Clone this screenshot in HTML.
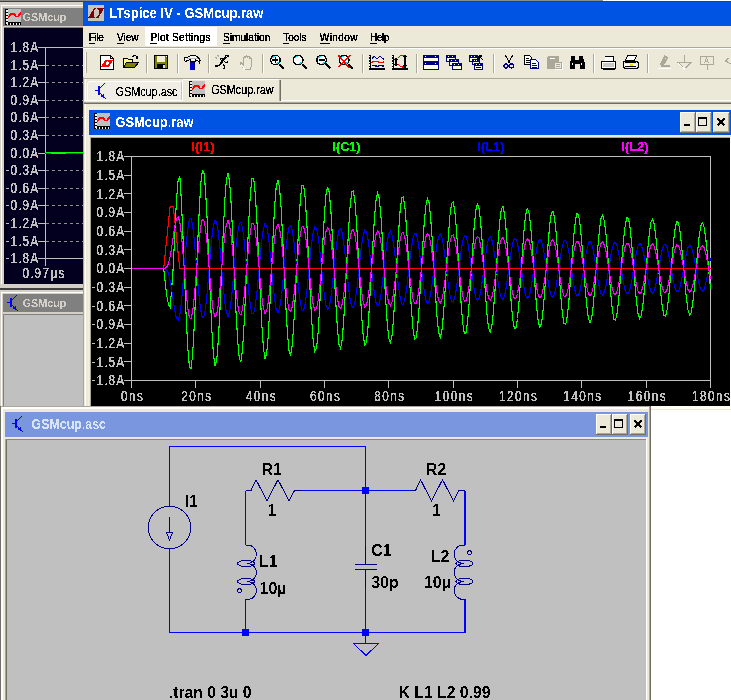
<!DOCTYPE html>
<html><head><meta charset="utf-8"><style>
html,body{margin:0;padding:0;background:#fff;width:731px;height:700px;overflow:hidden}
svg{display:block;font-family:"Liberation Sans",sans-serif}
</style></head><body>
<svg width="731" height="700" viewBox="0 0 731 700">
<defs><filter id="crispL" filterUnits="userSpaceOnUse" x="0" y="0" width="731" height="700"><feComponentTransfer><feFuncA type="discrete" tableValues="0 1 1 1"/></feComponentTransfer></filter>
<filter id="crispM" filterUnits="userSpaceOnUse" x="0" y="0" width="731" height="700"><feComponentTransfer><feFuncA type="discrete" tableValues="0 1 1"/></feComponentTransfer></filter>
<filter id="crispH" filterUnits="userSpaceOnUse" x="0" y="0" width="731" height="700"><feComponentTransfer><feFuncA type="discrete" tableValues="0 1"/></feComponentTransfer></filter><clipPath id="pc"><rect x="91" y="138" width="639" height="268"/></clipPath></defs>
<g shape-rendering="crispEdges">
<rect x="0" y="0" width="731" height="700" fill="#FFFFFF" />
<rect x="0" y="0" width="603" height="1" fill="#8C8C88" />
<rect x="0" y="1" width="83" height="1" fill="#404040" />
<rect x="0" y="2" width="83" height="287" fill="#D4D0C8" />
<rect x="1" y="5" width="82" height="1" fill="#FFFFFF" />
<rect x="1" y="5" width="1" height="283" fill="#FFFFFF" />
<rect x="3" y="8" width="80" height="18" fill="#808080" />
<rect x="8" y="9" width="13" height="13" fill="#C0C0C0" />
<rect x="5" y="9" width="3" height="16" fill="#000" />
<rect x="5" y="22" width="16" height="3" fill="#000" />
<rect x="6" y="10" width="1.5" height="1.5" fill="#F0F0F0" />
<rect x="6" y="13" width="1.5" height="1.5" fill="#F0F0F0" />
<rect x="6" y="16" width="1.5" height="1.5" fill="#F0F0F0" />
<rect x="6" y="19" width="1.5" height="1.5" fill="#F0F0F0" />
<rect x="6" y="22" width="1.5" height="1.5" fill="#F0F0F0" />
<rect x="6.5" y="23" width="1.5" height="1.5" fill="#F0F0F0" />
<rect x="9.5" y="23" width="1.5" height="1.5" fill="#F0F0F0" />
<rect x="12.5" y="23" width="1.5" height="1.5" fill="#F0F0F0" />
<rect x="15.5" y="23" width="1.5" height="1.5" fill="#F0F0F0" />
<rect x="18.5" y="23" width="1.5" height="1.5" fill="#F0F0F0" />
<path d="M8,17.5 L11,14 L14,14 L16,16.5 L18,16.5 L21,12.5" stroke="#FF0000" fill="none" stroke-width="1.8" />
<g filter="url(#crispH)"><text x="22.5" y="21.3" font-size="11.5" fill="#D4D0C8" font-weight="bold" text-anchor="start" textLength="44" lengthAdjust="spacingAndGlyphs">GSMcup</text></g>
<rect x="3" y="26" width="80" height="1" fill="#D4D0C8" />
<rect x="4" y="27" width="79" height="1" fill="#808080" />
<rect x="4" y="28" width="79" height="256" fill="#00001C" />
<rect x="5" y="28" width="78" height="255" fill="#02001E" />
<g filter="url(#crispL)"><text transform="translate(10.50,52.1) scale(0.84,1)" x="0.0 9.52 14.29 23.81" y="0" font-size="14" fill="#C0C0C0">1.8A</text></g>
<rect x="38" y="47" width="8" height="1" fill="#C0C0C0" />
<rect x="45" y="47" width="38" height="1" fill="#C0C0C0" />
<g filter="url(#crispL)"><text transform="translate(10.50,70.1) scale(0.84,1)" x="0.0 9.52 14.29 23.81" y="0" font-size="14" fill="#C0C0C0">1.5A</text></g>
<rect x="38" y="65" width="8" height="1" fill="#C0C0C0" />
<rect x="46" y="65" width="3" height="1" fill="#909090" />
<rect x="52" y="65" width="3" height="1" fill="#909090" />
<rect x="58" y="65" width="3" height="1" fill="#909090" />
<rect x="64" y="65" width="3" height="1" fill="#909090" />
<rect x="70" y="65" width="3" height="1" fill="#909090" />
<rect x="76" y="65" width="3" height="1" fill="#909090" />
<rect x="82" y="65" width="3" height="1" fill="#909090" />
<g filter="url(#crispL)"><text transform="translate(10.50,87.1) scale(0.84,1)" x="0.0 9.52 14.29 23.81" y="0" font-size="14" fill="#C0C0C0">1.2A</text></g>
<rect x="38" y="82" width="8" height="1" fill="#C0C0C0" />
<rect x="46" y="82" width="3" height="1" fill="#909090" />
<rect x="52" y="82" width="3" height="1" fill="#909090" />
<rect x="58" y="82" width="3" height="1" fill="#909090" />
<rect x="64" y="82" width="3" height="1" fill="#909090" />
<rect x="70" y="82" width="3" height="1" fill="#909090" />
<rect x="76" y="82" width="3" height="1" fill="#909090" />
<rect x="82" y="82" width="3" height="1" fill="#909090" />
<g filter="url(#crispL)"><text transform="translate(10.50,105.1) scale(0.84,1)" x="0.0 9.52 14.29 23.81" y="0" font-size="14" fill="#C0C0C0">0.9A</text></g>
<rect x="38" y="100" width="8" height="1" fill="#C0C0C0" />
<rect x="46" y="100" width="3" height="1" fill="#909090" />
<rect x="52" y="100" width="3" height="1" fill="#909090" />
<rect x="58" y="100" width="3" height="1" fill="#909090" />
<rect x="64" y="100" width="3" height="1" fill="#909090" />
<rect x="70" y="100" width="3" height="1" fill="#909090" />
<rect x="76" y="100" width="3" height="1" fill="#909090" />
<rect x="82" y="100" width="3" height="1" fill="#909090" />
<g filter="url(#crispL)"><text transform="translate(10.50,122.1) scale(0.84,1)" x="0.0 9.52 14.29 23.81" y="0" font-size="14" fill="#C0C0C0">0.6A</text></g>
<rect x="38" y="117" width="8" height="1" fill="#C0C0C0" />
<rect x="46" y="117" width="3" height="1" fill="#909090" />
<rect x="52" y="117" width="3" height="1" fill="#909090" />
<rect x="58" y="117" width="3" height="1" fill="#909090" />
<rect x="64" y="117" width="3" height="1" fill="#909090" />
<rect x="70" y="117" width="3" height="1" fill="#909090" />
<rect x="76" y="117" width="3" height="1" fill="#909090" />
<rect x="82" y="117" width="3" height="1" fill="#909090" />
<g filter="url(#crispL)"><text transform="translate(10.50,140.1) scale(0.84,1)" x="0.0 9.52 14.29 23.81" y="0" font-size="14" fill="#C0C0C0">0.3A</text></g>
<rect x="38" y="135" width="8" height="1" fill="#C0C0C0" />
<rect x="46" y="135" width="3" height="1" fill="#909090" />
<rect x="52" y="135" width="3" height="1" fill="#909090" />
<rect x="58" y="135" width="3" height="1" fill="#909090" />
<rect x="64" y="135" width="3" height="1" fill="#909090" />
<rect x="70" y="135" width="3" height="1" fill="#909090" />
<rect x="76" y="135" width="3" height="1" fill="#909090" />
<rect x="82" y="135" width="3" height="1" fill="#909090" />
<g filter="url(#crispL)"><text transform="translate(10.50,158.1) scale(0.84,1)" x="0.0 9.52 14.29 23.81" y="0" font-size="14" fill="#C0C0C0">0.0A</text></g>
<rect x="38" y="153" width="8" height="1" fill="#C0C0C0" />
<rect x="46" y="153" width="3" height="1" fill="#909090" />
<rect x="52" y="153" width="3" height="1" fill="#909090" />
<rect x="58" y="153" width="3" height="1" fill="#909090" />
<rect x="64" y="153" width="3" height="1" fill="#909090" />
<rect x="70" y="153" width="3" height="1" fill="#909090" />
<rect x="76" y="153" width="3" height="1" fill="#909090" />
<rect x="82" y="153" width="3" height="1" fill="#909090" />
<g filter="url(#crispL)"><text transform="translate(5.50,175.1) scale(0.84,1)" x="0.0 5.95 15.48 20.24 29.76" y="0" font-size="14" fill="#C0C0C0">-0.3A</text></g>
<rect x="38" y="170" width="8" height="1" fill="#C0C0C0" />
<rect x="46" y="170" width="3" height="1" fill="#909090" />
<rect x="52" y="170" width="3" height="1" fill="#909090" />
<rect x="58" y="170" width="3" height="1" fill="#909090" />
<rect x="64" y="170" width="3" height="1" fill="#909090" />
<rect x="70" y="170" width="3" height="1" fill="#909090" />
<rect x="76" y="170" width="3" height="1" fill="#909090" />
<rect x="82" y="170" width="3" height="1" fill="#909090" />
<g filter="url(#crispL)"><text transform="translate(5.50,193.1) scale(0.84,1)" x="0.0 5.95 15.48 20.24 29.76" y="0" font-size="14" fill="#C0C0C0">-0.6A</text></g>
<rect x="38" y="188" width="8" height="1" fill="#C0C0C0" />
<rect x="46" y="188" width="3" height="1" fill="#909090" />
<rect x="52" y="188" width="3" height="1" fill="#909090" />
<rect x="58" y="188" width="3" height="1" fill="#909090" />
<rect x="64" y="188" width="3" height="1" fill="#909090" />
<rect x="70" y="188" width="3" height="1" fill="#909090" />
<rect x="76" y="188" width="3" height="1" fill="#909090" />
<rect x="82" y="188" width="3" height="1" fill="#909090" />
<g filter="url(#crispL)"><text transform="translate(5.50,210.1) scale(0.84,1)" x="0.0 5.95 15.48 20.24 29.76" y="0" font-size="14" fill="#C0C0C0">-0.9A</text></g>
<rect x="38" y="205" width="8" height="1" fill="#C0C0C0" />
<rect x="46" y="205" width="3" height="1" fill="#909090" />
<rect x="52" y="205" width="3" height="1" fill="#909090" />
<rect x="58" y="205" width="3" height="1" fill="#909090" />
<rect x="64" y="205" width="3" height="1" fill="#909090" />
<rect x="70" y="205" width="3" height="1" fill="#909090" />
<rect x="76" y="205" width="3" height="1" fill="#909090" />
<rect x="82" y="205" width="3" height="1" fill="#909090" />
<g filter="url(#crispL)"><text transform="translate(5.50,228.1) scale(0.84,1)" x="0.0 5.95 15.48 20.24 29.76" y="0" font-size="14" fill="#C0C0C0">-1.2A</text></g>
<rect x="38" y="223" width="8" height="1" fill="#C0C0C0" />
<rect x="46" y="223" width="3" height="1" fill="#909090" />
<rect x="52" y="223" width="3" height="1" fill="#909090" />
<rect x="58" y="223" width="3" height="1" fill="#909090" />
<rect x="64" y="223" width="3" height="1" fill="#909090" />
<rect x="70" y="223" width="3" height="1" fill="#909090" />
<rect x="76" y="223" width="3" height="1" fill="#909090" />
<rect x="82" y="223" width="3" height="1" fill="#909090" />
<g filter="url(#crispL)"><text transform="translate(5.50,246.1) scale(0.84,1)" x="0.0 5.95 15.48 20.24 29.76" y="0" font-size="14" fill="#C0C0C0">-1.5A</text></g>
<rect x="38" y="241" width="8" height="1" fill="#C0C0C0" />
<rect x="46" y="241" width="3" height="1" fill="#909090" />
<rect x="52" y="241" width="3" height="1" fill="#909090" />
<rect x="58" y="241" width="3" height="1" fill="#909090" />
<rect x="64" y="241" width="3" height="1" fill="#909090" />
<rect x="70" y="241" width="3" height="1" fill="#909090" />
<rect x="76" y="241" width="3" height="1" fill="#909090" />
<rect x="82" y="241" width="3" height="1" fill="#909090" />
<g filter="url(#crispL)"><text transform="translate(5.50,263.1) scale(0.84,1)" x="0.0 5.95 15.48 20.24 29.76" y="0" font-size="14" fill="#C0C0C0">-1.8A</text></g>
<rect x="38" y="258" width="8" height="1" fill="#C0C0C0" />
<rect x="45" y="258" width="38" height="1" fill="#C0C0C0" />
<rect x="45" y="47" width="1" height="219" fill="#C0C0C0" />
<rect x="45" y="152" width="38" height="2" fill="#00FF00" />
<rect x="45" y="153" width="6" height="1" fill="#FF0000" />
<rect x="66" y="153" width="17" height="1" fill="#FF0000" />
<g filter="url(#crispL)"><text transform="translate(22.50,278) scale(0.84,1)" x="0.0 9.52 14.29 23.81 33.33 42.86" y="0" font-size="14" fill="#C0C0C0">0.97µs</text></g>
<rect x="0" y="284" width="83" height="4" fill="#D4D0C8" />
<rect x="0" y="288" width="83" height="2" fill="#404040" />
<rect x="0" y="290" width="83" height="117" fill="#D4D0C8" />
<rect x="1" y="292" width="82" height="1" fill="#FFFFFF" />
<rect x="1" y="292" width="1" height="114" fill="#FFFFFF" />
<rect x="3" y="294" width="80" height="18" fill="#808080" />
<rect x="7" y="302" width="3" height="1" fill="#0000FF" />
<rect x="10" y="298" width="2" height="9" fill="#0000FF" />
<rect x="12" y="299" width="1" height="1" fill="#0000FF" />
<rect x="13" y="298" width="1" height="1" fill="#0000FF" />
<rect x="14" y="297" width="1" height="1" fill="#0000FF" />
<rect x="15" y="296" width="1" height="1" fill="#0000FF" />
<rect x="16" y="295" width="1" height="1" fill="#0000FF" />
<rect x="12" y="305" width="1" height="1" fill="#0000FF" />
<rect x="13" y="306" width="1" height="1" fill="#0000FF" />
<rect x="14" y="307" width="1" height="1" fill="#0000FF" />
<rect x="15" y="308" width="1" height="1" fill="#0000FF" />
<rect x="16" y="309" width="1" height="1" fill="#0000FF" />
<rect x="17" y="310" width="1" height="1" fill="#0000FF" />
<rect x="13" y="307" width="3" height="2" fill="#0000FF" />
<rect x="15" y="306" width="1" height="1" fill="#0000FF" />
<rect x="15" y="309" width="2" height="1" fill="#0000FF" />
<g filter="url(#crispH)"><text x="22.5" y="306.8" font-size="11.5" fill="#D4D0C8" font-weight="bold" text-anchor="start" textLength="44" lengthAdjust="spacingAndGlyphs">GSMcup</text></g>
<rect x="3" y="312" width="80" height="2" fill="#D4D0C8" />
<rect x="3" y="314" width="80" height="1" fill="#808080" />
<rect x="3" y="314" width="1" height="93" fill="#808080" />
<rect x="4" y="315" width="79" height="92" fill="#C0C0C0" />
<rect x="83" y="1" width="648" height="25" fill="#0054E3" />
<rect x="83" y="1" width="648" height="1" fill="#0045C8" />
<rect x="88" y="5" width="16" height="16" fill="#C8C4BC" />
<path d="M94.3,8 L96.2,8 L93.6,11.5 L93.6,15.5 L95.2,18 L88,18 Z M97,8 L104,8 L98.6,18 L96,18 L98.6,14.5 L98.6,10.5 Z" stroke="none" fill="#800000" stroke-width="1" />
<g filter="url(#crispH)"><text x="109.5" y="18" font-size="14" fill="#FFFFFF" font-weight="bold" text-anchor="start" textLength="154" lengthAdjust="spacingAndGlyphs">LTspice IV - GSMcup.raw</text></g>
<rect x="83" y="26" width="648" height="21" fill="#ECE9D8" />
<rect x="145" y="27" width="72" height="19" fill="#FFFFFF" />
<g filter="url(#crispL)"><text transform="translate(88.7,41.3) scale(0.88,1)" x="0" y="0" font-size="11.5" fill="#000" textLength="17.39" lengthAdjust="spacing">File</text></g>
<rect x="89" y="43" width="6" height="1" fill="#000" />
<g filter="url(#crispL)"><text transform="translate(117.1,41.3) scale(0.88,1)" x="0" y="0" font-size="11.5" fill="#000" textLength="24.43" lengthAdjust="spacing">View</text></g>
<rect x="117" y="43" width="7" height="1" fill="#000" />
<g filter="url(#crispL)"><text transform="translate(150.4,41.3) scale(0.88,1)" x="0" y="0" font-size="11.5" fill="#000" textLength="68.18" lengthAdjust="spacing">Plot Settings</text></g>
<rect x="150" y="43" width="7" height="1" fill="#000" />
<g filter="url(#crispL)"><text transform="translate(223,41.3) scale(0.88,1)" x="0" y="0" font-size="11.5" fill="#000" textLength="53.75" lengthAdjust="spacing">Simulation</text></g>
<rect x="223" y="43" width="7" height="1" fill="#000" />
<g filter="url(#crispL)"><text transform="translate(283.3,41.3) scale(0.88,1)" x="0" y="0" font-size="11.5" fill="#000" textLength="26.59" lengthAdjust="spacing">Tools</text></g>
<rect x="283" y="43" width="6" height="1" fill="#000" />
<g filter="url(#crispL)"><text transform="translate(319.7,41.3) scale(0.88,1)" x="0" y="0" font-size="11.5" fill="#000" textLength="43.07" lengthAdjust="spacing">Window</text></g>
<rect x="320" y="43" width="10" height="1" fill="#000" />
<g filter="url(#crispL)"><text transform="translate(369.9,41.3) scale(0.88,1)" x="0" y="0" font-size="11.5" fill="#000" textLength="22.16" lengthAdjust="spacing">Help</text></g>
<rect x="370" y="43" width="7" height="1" fill="#000" />
<rect x="83" y="48" width="648" height="30" fill="#ECE9D8" />
<rect x="83" y="47" width="648" height="1" fill="#ACA899" />
<rect x="83" y="48" width="648" height="1" fill="#FFFFFF" />
<rect x="85" y="52" width="1" height="21" fill="#FFFFFF" />
<rect x="86" y="52" width="1" height="21" fill="#ACA899" />
<rect x="146" y="54" width="1" height="19" fill="#ACA899" />
<rect x="147" y="54" width="1" height="19" fill="#FFFFFF" />
<rect x="177" y="54" width="1" height="19" fill="#ACA899" />
<rect x="178" y="54" width="1" height="19" fill="#FFFFFF" />
<rect x="208" y="54" width="1" height="19" fill="#ACA899" />
<rect x="209" y="54" width="1" height="19" fill="#FFFFFF" />
<rect x="262" y="54" width="1" height="19" fill="#ACA899" />
<rect x="263" y="54" width="1" height="19" fill="#FFFFFF" />
<rect x="362" y="54" width="1" height="19" fill="#ACA899" />
<rect x="363" y="54" width="1" height="19" fill="#FFFFFF" />
<rect x="416" y="54" width="1" height="19" fill="#ACA899" />
<rect x="417" y="54" width="1" height="19" fill="#FFFFFF" />
<rect x="493" y="54" width="1" height="19" fill="#ACA899" />
<rect x="494" y="54" width="1" height="19" fill="#FFFFFF" />
<rect x="593" y="54" width="1" height="19" fill="#ACA899" />
<rect x="594" y="54" width="1" height="19" fill="#FFFFFF" />
<rect x="647" y="54" width="1" height="19" fill="#ACA899" />
<rect x="648" y="54" width="1" height="19" fill="#FFFFFF" />
<path d="M100.5,55.5 H110.5 L113.5,58.5 V69.5 H100.5 Z" fill="#fff" stroke="#000" stroke-width="1"/>
<path d="M110.5,55.5 V58.5 H113.5" fill="none" stroke="#000" stroke-width="1"/>
<path d="M101,66.5 L105.5,60 L113.5,60 L109,66.5 Z" fill="#FF0000"/>
<ellipse cx="107.2" cy="63.2" rx="1.4" ry="1.9" fill="#fff" transform="rotate(30 107.2 63.2)"/>
<path d="M123.5,58.5 H127.5 L128.5,59.5 H132.5 V62.5 H126.5 L123.5,67.5 Z" fill="#FFFF80" stroke="#000"/>
<path d="M126.5,62.5 H138.5 L134.5,67.5 H123.5 Z" fill="#808000" stroke="#000"/>
<path d="M132,57 Q134.5,54.5 137,56.5 V58.5" fill="none" stroke="#000" stroke-width="1.2"/>
<path d="M135,57.5 H139 L137,60 Z" fill="#000"/>
<rect x="154" y="55" width="14" height="14" fill="#000" />
<rect x="155" y="56" width="12" height="12" fill="#808000" />
<rect x="157" y="56" width="8" height="6" fill="#F4F0D8" />
<rect x="157" y="64" width="8" height="5" fill="#000" />
<rect x="163" y="65" width="2" height="3" fill="#E0E0E0" />
<rect x="166" y="56" width="1" height="1" fill="#fff" />
<path d="M184.5,59.5 Q184,56.5 187,57.3 Q189.5,55.5 193.5,55.5 Q198.5,55.8 200,60.5 L199.5,62.5 Q198,59.8 195.5,59.8 V61.5 H190 V59.8 Q187.5,59.8 186.2,61.2 Q184.5,61.5 184.5,59.5 Z" fill="#F4F4F4" stroke="#000" stroke-width="1"/>
<path d="M187,59 Q192,57.5 198,58.5" stroke="#B8B8B8" stroke-width="1" fill="none"/>
<rect x="190" y="62" width="5" height="8" fill="#0000D0" />
<rect x="190" y="62" width="5" height="1" fill="#000060" />
<rect x="194" y="63" width="1" height="7" fill="#000080" />
<rect x="225" y="55" width="4" height="2" fill="#000" />
<rect x="224" y="57" width="3" height="1" fill="#000" />
<rect x="226" y="56" width="1" height="1" fill="#fff" />
<path d="M225,57.5 L220.5,63.5" stroke="#000" stroke-width="2.2" fill="none"/>
<path d="M222.5,58.5 H220.5 V60 M224.5,61.5 L225.5,62.5 H227 L228.5,61.5 M221,63.5 L218,66 H215.5 V67 M223,64 L224.5,66 V68 L223.5,69.5" stroke="#000" stroke-width="1.2" fill="none"/>
<path d="M217.5,55.5 L219.5,56.5 M215.5,57.5 L217.5,58.5" stroke="#A8A8A0" stroke-width="1" fill="none"/>
<path d="M244.5,69.5 L240.5,64 Q240,62.5 241.5,63 L243.5,65 V57.5 Q244.5,56.5 245.5,57.5 V56.5 Q246.5,55.5 247.5,56.5 V57 Q248.5,56 249.5,57 V58.5 Q250.5,57.5 251.5,58.5 V66 L250,69.5 Z" fill="none" stroke="#ACA899" stroke-width="1"/>
<path d="M245.5,70.5 L241.5,65" fill="none" stroke="#fff" stroke-width="1"/>
<circle cx="275.4" cy="60" r="4.8" fill="#fff" stroke="#000" stroke-width="1.3"/>
<path d="M272.4,58 Q273.4,56.5 274.9,56.3 M278.4,62 Q277.4,63.5 275.9,63.7" stroke="#00E0F0" stroke-width="1.2" fill="none"/>
<path d="M279.4,64 L283.9,68.5" stroke="#000" stroke-width="2.2"/>
<path d="M272.4,60 H278.4 M275.4,57 V63" stroke="#000" stroke-width="1.2"/>
<circle cx="298.2" cy="60" r="4.8" fill="#fff" stroke="#000" stroke-width="1.3"/>
<path d="M295.2,58 Q296.2,56.5 297.7,56.3 M301.2,62 Q300.2,63.5 298.7,63.7" stroke="#00E0F0" stroke-width="1.2" fill="none"/>
<path d="M302.2,64 L306.7,68.5" stroke="#000" stroke-width="2.2"/>
<circle cx="321.6" cy="60" r="4.8" fill="#fff" stroke="#000" stroke-width="1.3"/>
<path d="M318.6,58 Q319.6,56.5 321.1,56.3 M324.6,62 Q323.6,63.5 322.1,63.7" stroke="#00E0F0" stroke-width="1.2" fill="none"/>
<path d="M325.6,64 L330.1,68.5" stroke="#000" stroke-width="2.2"/>
<path d="M318.6,60 H324.6" stroke="#000" stroke-width="1.2"/>
<circle cx="344.2" cy="60" r="4.8" fill="#fff" stroke="#000" stroke-width="1.3"/>
<path d="M341.2,58 Q342.2,56.5 343.7,56.3 M347.2,62 Q346.2,63.5 344.7,63.7" stroke="#00E0F0" stroke-width="1.2" fill="none"/>
<path d="M348.2,64 L352.7,68.5" stroke="#000" stroke-width="2.2"/>
<path d="M338.2,55 L349.2,68 M350.2,55 L338.2,67" stroke="#FF0000" stroke-width="1.5"/>
<rect x="369" y="55" width="2" height="15" fill="#000" />
<rect x="369" y="68" width="16" height="2" fill="#000" />
<rect x="368.5" y="56.0" width="1" height="1.2" fill="#fff"/>
<rect x="368.5" y="58.8" width="1" height="1.2" fill="#fff"/>
<rect x="368.5" y="61.6" width="1" height="1.2" fill="#fff"/>
<rect x="368.5" y="64.4" width="1" height="1.2" fill="#fff"/>
<rect x="368.5" y="67.2" width="1" height="1.2" fill="#fff"/>
<rect x="371" y="69.5" width="1.2" height="1" fill="#fff"/>
<rect x="374" y="69.5" width="1.2" height="1" fill="#fff"/>
<rect x="377" y="69.5" width="1.2" height="1" fill="#fff"/>
<rect x="380" y="69.5" width="1.2" height="1" fill="#fff"/>
<rect x="383" y="69.5" width="1.2" height="1" fill="#fff"/>
<path d="M371.5,59.5 L374,56 L377,59 L380,56 L384,59.5" stroke="#000080" fill="none" stroke-width="1"/>
<path d="M371.5,62.5 L374,61.5 L377,61.5 L379.5,62.5 L384,62" stroke="#FF0000" fill="none" stroke-width="1.2"/>
<path d="M371.5,65.5 L375,65.5 L377,66.5 L380,65.5 L384,66" stroke="#000080" fill="none" stroke-width="1.4"/>
<rect x="392" y="55" width="2" height="15" fill="#000" />
<rect x="392" y="68" width="16" height="2" fill="#000" />
<rect x="391.5" y="56.0" width="1" height="1.2" fill="#fff"/>
<rect x="391.5" y="58.8" width="1" height="1.2" fill="#fff"/>
<rect x="391.5" y="61.6" width="1" height="1.2" fill="#fff"/>
<rect x="391.5" y="64.4" width="1" height="1.2" fill="#fff"/>
<rect x="391.5" y="67.2" width="1" height="1.2" fill="#fff"/>
<rect x="394" y="69.5" width="1.2" height="1" fill="#fff"/>
<rect x="397" y="69.5" width="1.2" height="1" fill="#fff"/>
<rect x="400" y="69.5" width="1.2" height="1" fill="#fff"/>
<rect x="403" y="69.5" width="1.2" height="1" fill="#fff"/>
<rect x="406" y="69.5" width="1.2" height="1" fill="#fff"/>
<path d="M398,57.5 Q401,55 404,55.5 M398,64.5 Q401,67 404,67.5" stroke="#FF0000" fill="none" stroke-width="1"/>
<path d="M396,59 V65 M394.5,60 L396,58 L397.5,60 M394.5,64 L396,66 L397.5,64 M405,56 V67 M403.5,57.5 L405,55.5 L406.5,57.5 M403.5,65.5 L405,67.5 L406.5,65.5" stroke="#000" fill="none" stroke-width="1.2"/>
<rect x="423.5" y="55.5" width="15" height="6" fill="#FFFDE8" stroke="#000080" stroke-width="1"/>
<rect x="423" y="55" width="16" height="3" fill="#000080" />
<rect x="425" y="56" width="1" height="1" fill="#fff" />
<rect x="435" y="56" width="1" height="1" fill="#fff" />
<rect x="423.5" y="62.5" width="15" height="7" fill="#FFFDE8" stroke="#000080" stroke-width="1"/>
<rect x="423" y="62" width="16" height="3" fill="#000080" />
<rect x="425" y="63" width="1" height="1" fill="#fff" />
<rect x="435" y="63" width="1" height="1" fill="#fff" />
<rect x="446.5" y="55.5" width="9" height="6" fill="#FFFDE8" stroke="#000080" stroke-width="1"/>
<rect x="446" y="55" width="10" height="3" fill="#000080" />
<rect x="448" y="56" width="1" height="1" fill="#fff" />
<rect x="452" y="56" width="1" height="1" fill="#fff" />
<rect x="449.5" y="59.5" width="9" height="6" fill="#FFFDE8" stroke="#000080" stroke-width="1"/>
<rect x="449" y="59" width="10" height="3" fill="#000080" />
<rect x="451" y="60" width="1" height="1" fill="#fff" />
<rect x="455" y="60" width="1" height="1" fill="#fff" />
<rect x="452.5" y="63.5" width="9" height="6" fill="#FFFDE8" stroke="#000080" stroke-width="1"/>
<rect x="452" y="63" width="10" height="3" fill="#000080" />
<rect x="454" y="64" width="1" height="1" fill="#fff" />
<rect x="458" y="64" width="1" height="1" fill="#fff" />
<rect x="469.5" y="55.5" width="8" height="6" fill="#FFFDE8" stroke="#000080" stroke-width="1"/>
<rect x="469" y="55" width="9" height="3" fill="#000080" />
<rect x="471" y="56" width="1" height="1" fill="#fff" />
<rect x="474" y="56" width="1" height="1" fill="#fff" />
<rect x="472.5" y="59.5" width="7" height="5" fill="#FFFDE8" stroke="#000080" stroke-width="1"/>
<rect x="472" y="59" width="8" height="3" fill="#000080" />
<rect x="474" y="60" width="1" height="1" fill="#fff" />
<rect x="476" y="60" width="1" height="1" fill="#fff" />
<rect x="474.5" y="63.5" width="8" height="6" fill="#FFFDE8" stroke="#000080" stroke-width="1"/>
<rect x="474" y="63" width="9" height="3" fill="#000080" />
<rect x="476" y="64" width="1" height="1" fill="#fff" />
<rect x="479" y="64" width="1" height="1" fill="#fff" />
<path d="M479,56 L483,60 M479,56 V58.5 M479,56 H481.5" stroke="#000" stroke-width="1.2" fill="none"/>
<rect x="476" y="67" width="5" height="1" fill="#000" />
<path d="M505,55 L510,63 M513,55 L508,63" stroke="#000" stroke-width="1"/>
<circle cx="506" cy="66" r="2" fill="none" stroke="#000080" stroke-width="1.3"/>
<circle cx="511.5" cy="66" r="2" fill="none" stroke="#000080" stroke-width="1.3"/>
<path d="M524.5,55.5 H529.5 L531.5,57.5 V64.5 H524.5 Z" fill="#fff" stroke="#000"/>
<path d="M526,58 H529 M526,60 H530 M526,62 H530" stroke="#000"/>
<path d="M530.5,59.5 H535.5 L538.5,62.5 V68.5 H530.5 Z" fill="#fff" stroke="#000080" stroke-width="1.2"/>
<path d="M532,63 H536 M532,65 H537 M532,67 H537" stroke="#000080"/>
<rect x="547.5" y="56.5" width="11" height="12" rx="1.5" fill="#ACA899" stroke="#ACA899"/>
<rect x="550" y="58" width="5" height="1" fill="#fff" />
<rect x="554.5" y="62.5" width="7" height="6" fill="#ECE9D8" stroke="#ACA899"/>
<rect x="556" y="64" width="4" height="1" fill="#ACA899" />
<rect x="556" y="66" width="4" height="1" fill="#ACA899" />
<path d="M562,63 V69 H555" stroke="#fff" fill="none"/>
<path d="M571.5,56 H575 V60 H579 V56 H582.5 L585,63 V68.5 H580 V64 H575 V68.5 H570 V63 Z" fill="#000"/>
<rect x="572" y="63" width="1" height="2" fill="#fff" />
<rect x="581" y="63" width="1" height="2" fill="#fff" />
<rect x="575" y="61" width="4" height="2" fill="#000" />
<path d="M604.5,56.5 H613.5 V61" fill="#fff" stroke="#000"/>
<rect x="605" y="57" width="8" height="4" fill="#fff" />
<path d="M601.5,61.5 H615.5 V68.5 H601.5 Z" fill="#fff" stroke="#000" stroke-width="1.2"/>
<rect x="603" y="63" width="11" height="4" fill="#C8C8C8"/>
<rect x="603" y="69" width="12" height="1" fill="#000" />
<path d="M627.5,55.5 H636.5 L634.5,60.5 H625.5 Z" fill="#fff" stroke="#000"/>
<path d="M623.5,61.5 H637.5 L638.5,63 V67.5 L637,68.5 H624.5 L623.5,67 Z" fill="#E8E8E8" stroke="#000" stroke-width="1.2"/>
<rect x="624" y="64" width="12" height="2" fill="#fff" />
<rect x="630" y="64" width="3" height="2" fill="#F0E000" />
<rect x="625" y="62" width="11" height="1" fill="#000" />
<rect x="625" y="66" width="11" height="1" fill="#000" />
<path d="M660.5,65.5 L665,56.5 L667,58 L662.5,66 H670" stroke="#ACA899" stroke-width="2" fill="none"/>
<path d="M657.5,68.5 H670.5" stroke="#fff" fill="none"/>
<path d="M684.5,55 V62.5 M677.5,62.5 H691.5 L684.5,68.5 Z" stroke="#ACA899" stroke-width="1.2" fill="none"/>
<path d="M678.5,63.5 L685,69.5" stroke="#fff" fill="none"/>
<rect x="700.5" y="56.5" width="13" height="8" rx="1" stroke="#ACA899" stroke-width="1.2" fill="none"/>
<path d="M707,65 V70 M704.5,63 L706.5,58 L708.5,63 M705,61 H708" stroke="#ACA899" stroke-width="1" fill="none"/>
<path d="M729,58 L725.5,61 L731,64" stroke="#ACA899" stroke-width="1.2" fill="none"/>
<rect x="83" y="77" width="648" height="1" fill="#ECE9D8" />
<rect x="84" y="78" width="647" height="1" fill="#ACA899" />
<rect x="83" y="79" width="648" height="23" fill="#ECE9D8" />
<rect x="85" y="79" width="1" height="22" fill="#FFFFFF" />
<rect x="83" y="100" width="648" height="1" fill="#FFFFFF" />
<rect x="87" y="82" width="94" height="18" fill="#F0EEE4" />
<rect x="89" y="81" width="92" height="1" fill="#FFFFFF" />
<rect x="87" y="83" width="1" height="17" fill="#FFFFFF" />
<rect x="88" y="82" width="1" height="1" fill="#FFFFFF" />
<rect x="181" y="82" width="1" height="18" fill="#C8C4B4" />
<rect x="95" y="90" width="3" height="1" fill="#0000FF" />
<rect x="98" y="86" width="2" height="9" fill="#0000FF" />
<rect x="100" y="87" width="1" height="1" fill="#0000FF" />
<rect x="101" y="86" width="1" height="1" fill="#0000FF" />
<rect x="102" y="85" width="1" height="1" fill="#0000FF" />
<rect x="103" y="84" width="1" height="1" fill="#0000FF" />
<rect x="104" y="83" width="1" height="1" fill="#0000FF" />
<rect x="100" y="93" width="1" height="1" fill="#0000FF" />
<rect x="101" y="94" width="1" height="1" fill="#0000FF" />
<rect x="102" y="95" width="1" height="1" fill="#0000FF" />
<rect x="103" y="96" width="1" height="1" fill="#0000FF" />
<rect x="104" y="97" width="1" height="1" fill="#0000FF" />
<rect x="105" y="98" width="1" height="1" fill="#0000FF" />
<rect x="101" y="95" width="3" height="2" fill="#0000FF" />
<rect x="103" y="94" width="1" height="1" fill="#0000FF" />
<rect x="103" y="97" width="2" height="1" fill="#0000FF" />
<g filter="url(#crispM)"><text x="115.5" y="96.3" font-size="12" fill="#000" font-weight="normal" text-anchor="start" textLength="62" lengthAdjust="spacingAndGlyphs">GSMcup.asc</text></g>
<rect x="182" y="79" width="98" height="22" fill="#ECE9D8" />
<rect x="183" y="79" width="96" height="1" fill="#FFFFFF" />
<rect x="182" y="80" width="1" height="21" fill="#FFFFFF" />
<rect x="279" y="80" width="1" height="21" fill="#ACA899" />
<rect x="280" y="80" width="1" height="21" fill="#716F64" />
<rect x="192" y="81" width="13" height="13" fill="#C0C0C0" />
<rect x="189" y="81" width="3" height="16" fill="#000" />
<rect x="189" y="94" width="16" height="3" fill="#000" />
<rect x="190" y="82" width="1.5" height="1.5" fill="#F0F0F0" />
<rect x="190" y="85" width="1.5" height="1.5" fill="#F0F0F0" />
<rect x="190" y="88" width="1.5" height="1.5" fill="#F0F0F0" />
<rect x="190" y="91" width="1.5" height="1.5" fill="#F0F0F0" />
<rect x="190" y="94" width="1.5" height="1.5" fill="#F0F0F0" />
<rect x="190.5" y="95" width="1.5" height="1.5" fill="#F0F0F0" />
<rect x="193.5" y="95" width="1.5" height="1.5" fill="#F0F0F0" />
<rect x="196.5" y="95" width="1.5" height="1.5" fill="#F0F0F0" />
<rect x="199.5" y="95" width="1.5" height="1.5" fill="#F0F0F0" />
<rect x="202.5" y="95" width="1.5" height="1.5" fill="#F0F0F0" />
<path d="M192,89.5 L195,86 L198,86 L200,88.5 L202,88.5 L205,84.5" stroke="#FF0000" fill="none" stroke-width="1.8" />
<g filter="url(#crispM)"><text x="211.2" y="94.2" font-size="12" fill="#000" font-weight="normal" text-anchor="start" textLength="62.4" lengthAdjust="spacingAndGlyphs">GSMcup.raw</text></g>
<rect x="84" y="102" width="647" height="1" fill="#ACA899" />
<rect x="84" y="103" width="647" height="1" fill="#716F64" />
<rect x="84" y="104" width="647" height="303" fill="#ECE9D8" />
<rect x="85" y="104" width="1" height="303" fill="#FFFFFF" />
<rect x="88" y="107" width="643" height="2" fill="#F1EFE2" />
<rect x="88" y="107" width="1" height="300" fill="#F1EFE2" />
<rect x="83" y="77" width="1" height="330" fill="#ACA899" />
<rect x="89" y="110" width="642" height="25" fill="#0054E3" />
<rect x="97" y="113" width="13" height="13" fill="#C0C0C0" />
<rect x="94" y="113" width="3" height="16" fill="#000" />
<rect x="94" y="126" width="16" height="3" fill="#000" />
<rect x="95" y="114" width="1.5" height="1.5" fill="#F0F0F0" />
<rect x="95" y="117" width="1.5" height="1.5" fill="#F0F0F0" />
<rect x="95" y="120" width="1.5" height="1.5" fill="#F0F0F0" />
<rect x="95" y="123" width="1.5" height="1.5" fill="#F0F0F0" />
<rect x="95" y="126" width="1.5" height="1.5" fill="#F0F0F0" />
<rect x="95.5" y="127" width="1.5" height="1.5" fill="#F0F0F0" />
<rect x="98.5" y="127" width="1.5" height="1.5" fill="#F0F0F0" />
<rect x="101.5" y="127" width="1.5" height="1.5" fill="#F0F0F0" />
<rect x="104.5" y="127" width="1.5" height="1.5" fill="#F0F0F0" />
<rect x="107.5" y="127" width="1.5" height="1.5" fill="#F0F0F0" />
<path d="M97,121.5 L100,118 L103,118 L105,120.5 L107,120.5 L110,116.5" stroke="#FF0000" fill="none" stroke-width="1.8" />
<g filter="url(#crispH)"><text x="115.5" y="126.5" font-size="14" fill="#FFFFFF" font-weight="bold" text-anchor="start" textLength="78" lengthAdjust="spacingAndGlyphs">GSMcup.raw</text></g>
<rect x="680" y="112" width="16" height="21" fill="#716F64" />
<rect x="680" y="112" width="15" height="20" fill="#FFFFFF" />
<rect x="681" y="113" width="14" height="19" fill="#ACA899" />
<rect x="681" y="113" width="13" height="18" fill="#ECE9D8" />
<rect x="684" y="124" width="6" height="2" fill="#000" />
<rect x="696" y="112" width="16" height="21" fill="#716F64" />
<rect x="696" y="112" width="15" height="20" fill="#FFFFFF" />
<rect x="697" y="113" width="14" height="19" fill="#ACA899" />
<rect x="697" y="113" width="13" height="18" fill="#ECE9D8" />
<rect x="698" y="117" width="9" height="9" fill="#000" />
<rect x="699" y="119" width="7" height="6" fill="#ECE9D8" />
<rect x="713" y="112" width="17" height="21" fill="#716F64" />
<rect x="713" y="112" width="16" height="20" fill="#FFFFFF" />
<rect x="714" y="113" width="15" height="19" fill="#ACA899" />
<rect x="714" y="113" width="14" height="18" fill="#ECE9D8" />
<path d="M717.5,118.5 L724.5,125.5 M724.5,118.5 L717.5,125.5" stroke="#000" fill="none" stroke-width="2" />
<rect x="89" y="135" width="642" height="2" fill="#ECE9D8" />
<rect x="90" y="137" width="641" height="1" fill="#ACA899" />
<rect x="90" y="137" width="1" height="269" fill="#ACA899" />
<rect x="91" y="138" width="639" height="268" fill="#000000" />
<rect x="730" y="137" width="1" height="270" fill="#FFFFFF" />
<rect x="131" y="156" width="580" height="1" fill="#C0C0C0" />
<rect x="131" y="380" width="580" height="1" fill="#C0C0C0" />
<rect x="131" y="156" width="1" height="225" fill="#C0C0C0" />
<rect x="710" y="156" width="1" height="225" fill="#C0C0C0" />
<rect x="124" y="156" width="7" height="1" fill="#C0C0C0" />
<g filter="url(#crispL)"><text transform="translate(96.50,161.2) scale(0.84,1)" x="0.0 9.52 14.29 23.81" y="0" font-size="14" fill="#C0C0C0">1.8A</text></g>
<rect x="124" y="175" width="7" height="1" fill="#C0C0C0" />
<g filter="url(#crispL)"><text transform="translate(96.50,179.86666666666665) scale(0.84,1)" x="0.0 9.52 14.29 23.81" y="0" font-size="14" fill="#C0C0C0">1.5A</text></g>
<rect x="124" y="193" width="7" height="1" fill="#C0C0C0" />
<g filter="url(#crispL)"><text transform="translate(96.50,198.53333333333333) scale(0.84,1)" x="0.0 9.52 14.29 23.81" y="0" font-size="14" fill="#C0C0C0">1.2A</text></g>
<rect x="124" y="212" width="7" height="1" fill="#C0C0C0" />
<g filter="url(#crispL)"><text transform="translate(96.50,217.2) scale(0.84,1)" x="0.0 9.52 14.29 23.81" y="0" font-size="14" fill="#C0C0C0">0.9A</text></g>
<rect x="124" y="231" width="7" height="1" fill="#C0C0C0" />
<g filter="url(#crispL)"><text transform="translate(96.50,235.86666666666667) scale(0.84,1)" x="0.0 9.52 14.29 23.81" y="0" font-size="14" fill="#C0C0C0">0.6A</text></g>
<rect x="124" y="249" width="7" height="1" fill="#C0C0C0" />
<g filter="url(#crispL)"><text transform="translate(96.50,254.53333333333333) scale(0.84,1)" x="0.0 9.52 14.29 23.81" y="0" font-size="14" fill="#C0C0C0">0.3A</text></g>
<rect x="124" y="268" width="7" height="1" fill="#C0C0C0" />
<g filter="url(#crispL)"><text transform="translate(96.50,273.2) scale(0.84,1)" x="0.0 9.52 14.29 23.81" y="0" font-size="14" fill="#C0C0C0">0.0A</text></g>
<rect x="124" y="287" width="7" height="1" fill="#C0C0C0" />
<g filter="url(#crispL)"><text transform="translate(91.50,291.8666666666667) scale(0.84,1)" x="0.0 5.95 15.48 20.24 29.76" y="0" font-size="14" fill="#C0C0C0">-0.3A</text></g>
<rect x="124" y="305" width="7" height="1" fill="#C0C0C0" />
<g filter="url(#crispL)"><text transform="translate(91.50,310.53333333333336) scale(0.84,1)" x="0.0 5.95 15.48 20.24 29.76" y="0" font-size="14" fill="#C0C0C0">-0.6A</text></g>
<rect x="124" y="324" width="7" height="1" fill="#C0C0C0" />
<g filter="url(#crispL)"><text transform="translate(91.50,329.2) scale(0.84,1)" x="0.0 5.95 15.48 20.24 29.76" y="0" font-size="14" fill="#C0C0C0">-0.9A</text></g>
<rect x="124" y="343" width="7" height="1" fill="#C0C0C0" />
<g filter="url(#crispL)"><text transform="translate(91.50,347.8666666666667) scale(0.84,1)" x="0.0 5.95 15.48 20.24 29.76" y="0" font-size="14" fill="#C0C0C0">-1.2A</text></g>
<rect x="124" y="361" width="7" height="1" fill="#C0C0C0" />
<g filter="url(#crispL)"><text transform="translate(91.50,366.53333333333336) scale(0.84,1)" x="0.0 5.95 15.48 20.24 29.76" y="0" font-size="14" fill="#C0C0C0">-1.5A</text></g>
<rect x="124" y="380" width="7" height="1" fill="#C0C0C0" />
<g filter="url(#crispL)"><text transform="translate(91.50,385.2) scale(0.84,1)" x="0.0 5.95 15.48 20.24 29.76" y="0" font-size="14" fill="#C0C0C0">-1.8A</text></g>
<rect x="131" y="380" width="1" height="8" fill="#C0C0C0" />
<g filter="url(#crispL)"><text transform="translate(121.00,401) scale(0.84,1)" x="0.0 9.52 19.05" y="0" font-size="14" fill="#C0C0C0">0ns</text></g>
<rect x="195" y="380" width="1" height="8" fill="#C0C0C0" />
<g filter="url(#crispL)"><text transform="translate(181.33,401) scale(0.84,1)" x="0.0 9.52 19.05 28.57" y="0" font-size="14" fill="#C0C0C0">20ns</text></g>
<rect x="260" y="380" width="1" height="8" fill="#C0C0C0" />
<g filter="url(#crispL)"><text transform="translate(245.67,401) scale(0.84,1)" x="0.0 9.52 19.05 28.57" y="0" font-size="14" fill="#C0C0C0">40ns</text></g>
<rect x="324" y="380" width="1" height="8" fill="#C0C0C0" />
<g filter="url(#crispL)"><text transform="translate(310.00,401) scale(0.84,1)" x="0.0 9.52 19.05 28.57" y="0" font-size="14" fill="#C0C0C0">60ns</text></g>
<rect x="388" y="380" width="1" height="8" fill="#C0C0C0" />
<g filter="url(#crispL)"><text transform="translate(374.33,401) scale(0.84,1)" x="0.0 9.52 19.05 28.57" y="0" font-size="14" fill="#C0C0C0">80ns</text></g>
<rect x="453" y="380" width="1" height="8" fill="#C0C0C0" />
<g filter="url(#crispL)"><text transform="translate(434.67,401) scale(0.84,1)" x="0.0 9.52 19.05 28.57 38.1" y="0" font-size="14" fill="#C0C0C0">100ns</text></g>
<rect x="517" y="380" width="1" height="8" fill="#C0C0C0" />
<g filter="url(#crispL)"><text transform="translate(499.00,401) scale(0.84,1)" x="0.0 9.52 19.05 28.57 38.1" y="0" font-size="14" fill="#C0C0C0">120ns</text></g>
<rect x="581" y="380" width="1" height="8" fill="#C0C0C0" />
<g filter="url(#crispL)"><text transform="translate(563.33,401) scale(0.84,1)" x="0.0 9.52 19.05 28.57 38.1" y="0" font-size="14" fill="#C0C0C0">140ns</text></g>
<rect x="646" y="380" width="1" height="8" fill="#C0C0C0" />
<g filter="url(#crispL)"><text transform="translate(627.67,401) scale(0.84,1)" x="0.0 9.52 19.05 28.57 38.1" y="0" font-size="14" fill="#C0C0C0">160ns</text></g>
<rect x="710" y="380" width="1" height="8" fill="#C0C0C0" />
<g filter="url(#crispL)"><text transform="translate(692.00,401) scale(0.84,1)" x="0.0 9.52 19.05 28.57 38.1" y="0" font-size="14" fill="#C0C0C0">180ns</text></g>
<g filter="url(#crispM)"><text x="191.5" y="151" font-size="13.5" fill="#FF0000" font-weight="bold" text-anchor="start" textLength="23" lengthAdjust="spacingAndGlyphs">I(I1)</text></g>
<g filter="url(#crispM)"><text x="332.5" y="151" font-size="13.5" fill="#00FF00" font-weight="bold" text-anchor="start" textLength="28" lengthAdjust="spacingAndGlyphs">I(C1)</text></g>
<g filter="url(#crispM)"><text x="477.5" y="151" font-size="13.5" fill="#0000FF" font-weight="bold" text-anchor="start" textLength="27" lengthAdjust="spacingAndGlyphs">I(L1)</text></g>
<g filter="url(#crispM)"><text x="621.5" y="151" font-size="13.5" fill="#FF00FF" font-weight="bold" text-anchor="start" textLength="27" lengthAdjust="spacingAndGlyphs">I(L2)</text></g>
<g clip-path="url(#pc)">
<polyline points="131.5,268.5 131.5,268.5 133.1,268.5 134.7,268.5 136.3,268.5 137.9,268.5 139.5,268.5 141.2,268.5 142.8,268.5 144.4,268.5 146.0,268.5 147.6,268.5 149.2,268.5 150.8,268.5 152.4,268.5 154.0,268.5 155.6,268.5 157.2,268.5 158.8,268.5 160.4,268.5 162.1,268.5 163.7,268.5 165.3,252.9 166.9,237.4 168.5,221.8 170.1,206.3 171.7,206.3 173.3,206.3 174.9,221.8 176.5,237.4 178.1,252.9 179.8,268.5 181.4,268.5 183.0,268.5 184.6,268.5 186.2,268.5 187.8,268.5 189.4,268.5 191.0,268.5 192.6,268.5 194.2,268.5 195.8,268.5 197.4,268.5 199.1,268.5 200.7,268.5 202.3,268.5 203.9,268.5 205.5,268.5 207.1,268.5 208.7,268.5 210.3,268.5 211.9,268.5 213.5,268.5 215.1,268.5 216.7,268.5 218.3,268.5 220.0,268.5 221.6,268.5 223.2,268.5 224.8,268.5 226.4,268.5 228.0,268.5 229.6,268.5 231.2,268.5 232.8,268.5 234.4,268.5 236.0,268.5 237.7,268.5 239.3,268.5 240.9,268.5 242.5,268.5 244.1,268.5 245.7,268.5 247.3,268.5 248.9,268.5 250.5,268.5 252.1,268.5 253.7,268.5 255.3,268.5 256.9,268.5 258.6,268.5 260.2,268.5 261.8,268.5 263.4,268.5 265.0,268.5 266.6,268.5 268.2,268.5 269.8,268.5 271.4,268.5 273.0,268.5 274.6,268.5 276.2,268.5 277.9,268.5 279.5,268.5 281.1,268.5 282.7,268.5 284.3,268.5 285.9,268.5 287.5,268.5 289.1,268.5 290.7,268.5 292.3,268.5 293.9,268.5 295.6,268.5 297.2,268.5 298.8,268.5 300.4,268.5 302.0,268.5 303.6,268.5 305.2,268.5 306.8,268.5 308.4,268.5 310.0,268.5 311.6,268.5 313.2,268.5 314.8,268.5 316.5,268.5 318.1,268.5 319.7,268.5 321.3,268.5 322.9,268.5 324.5,268.5 326.1,268.5 327.7,268.5 329.3,268.5 330.9,268.5 332.5,268.5 334.1,268.5 335.8,268.5 337.4,268.5 339.0,268.5 340.6,268.5 342.2,268.5 343.8,268.5 345.4,268.5 347.0,268.5 348.6,268.5 350.2,268.5 351.8,268.5 353.4,268.5 355.1,268.5 356.7,268.5 358.3,268.5 359.9,268.5 361.5,268.5 363.1,268.5 364.7,268.5 366.3,268.5 367.9,268.5 369.5,268.5 371.1,268.5 372.8,268.5 374.4,268.5 376.0,268.5 377.6,268.5 379.2,268.5 380.8,268.5 382.4,268.5 384.0,268.5 385.6,268.5 387.2,268.5 388.8,268.5 390.4,268.5 392.1,268.5 393.7,268.5 395.3,268.5 396.9,268.5 398.5,268.5 400.1,268.5 401.7,268.5 403.3,268.5 404.9,268.5 406.5,268.5 408.1,268.5 409.7,268.5 411.4,268.5 413.0,268.5 414.6,268.5 416.2,268.5 417.8,268.5 419.4,268.5 421.0,268.5 422.6,268.5 424.2,268.5 425.8,268.5 427.4,268.5 429.0,268.5 430.6,268.5 432.3,268.5 433.9,268.5 435.5,268.5 437.1,268.5 438.7,268.5 440.3,268.5 441.9,268.5 443.5,268.5 445.1,268.5 446.7,268.5 448.3,268.5 449.9,268.5 451.6,268.5 453.2,268.5 454.8,268.5 456.4,268.5 458.0,268.5 459.6,268.5 461.2,268.5 462.8,268.5 464.4,268.5 466.0,268.5 467.6,268.5 469.2,268.5 470.9,268.5 472.5,268.5 474.1,268.5 475.7,268.5 477.3,268.5 478.9,268.5 480.5,268.5 482.1,268.5 483.7,268.5 485.3,268.5 486.9,268.5 488.5,268.5 490.2,268.5 491.8,268.5 493.4,268.5 495.0,268.5 496.6,268.5 498.2,268.5 499.8,268.5 501.4,268.5 503.0,268.5 504.6,268.5 506.2,268.5 507.8,268.5 509.5,268.5 511.1,268.5 512.7,268.5 514.3,268.5 515.9,268.5 517.5,268.5 519.1,268.5 520.7,268.5 522.3,268.5 523.9,268.5 525.5,268.5 527.1,268.5 528.8,268.5 530.4,268.5 532.0,268.5 533.6,268.5 535.2,268.5 536.8,268.5 538.4,268.5 540.0,268.5 541.6,268.5 543.2,268.5 544.8,268.5 546.5,268.5 548.1,268.5 549.7,268.5 551.3,268.5 552.9,268.5 554.5,268.5 556.1,268.5 557.7,268.5 559.3,268.5 560.9,268.5 562.5,268.5 564.1,268.5 565.8,268.5 567.4,268.5 569.0,268.5 570.6,268.5 572.2,268.5 573.8,268.5 575.4,268.5 577.0,268.5 578.6,268.5 580.2,268.5 581.8,268.5 583.4,268.5 585.0,268.5 586.7,268.5 588.3,268.5 589.9,268.5 591.5,268.5 593.1,268.5 594.7,268.5 596.3,268.5 597.9,268.5 599.5,268.5 601.1,268.5 602.7,268.5 604.3,268.5 606.0,268.5 607.6,268.5 609.2,268.5 610.8,268.5 612.4,268.5 614.0,268.5 615.6,268.5 617.2,268.5 618.8,268.5 620.4,268.5 622.0,268.5 623.6,268.5 625.3,268.5 626.9,268.5 628.5,268.5 630.1,268.5 631.7,268.5 633.3,268.5 634.9,268.5 636.5,268.5 638.1,268.5 639.7,268.5 641.3,268.5 642.9,268.5 644.6,268.5 646.2,268.5 647.8,268.5 649.4,268.5 651.0,268.5 652.6,268.5 654.2,268.5 655.8,268.5 657.4,268.5 659.0,268.5 660.6,268.5 662.2,268.5 663.9,268.5 665.5,268.5 667.1,268.5 668.7,268.5 670.3,268.5 671.9,268.5 673.5,268.5 675.1,268.5 676.7,268.5 678.3,268.5 679.9,268.5 681.5,268.5 683.2,268.5 684.8,268.5 686.4,268.5 688.0,268.5 689.6,268.5 691.2,268.5 692.8,268.5 694.4,268.5 696.0,268.5 697.6,268.5 699.2,268.5 700.8,268.5 702.5,268.5 704.1,268.5 705.7,268.5 707.3,268.5 708.9,268.5 710.5,268.5" stroke="#FF0000" fill="none" stroke-width="1.1"/>
<polyline points="131.5,268.5 131.5,268.5 133.1,268.5 134.7,268.5 136.3,268.5 137.9,268.5 139.5,268.5 141.2,268.5 142.8,268.5 144.4,268.5 146.0,268.5 147.6,268.5 149.2,268.5 150.8,268.5 152.4,268.5 154.0,268.5 155.6,268.5 157.2,268.5 158.8,268.5 160.4,268.5 162.1,268.5 163.7,268.5 165.3,283.6 166.9,296.3 168.5,304.6 170.1,307.0 171.7,288.2 173.3,266.3 174.9,229.7 176.5,199.5 178.1,180.5 179.8,175.7 181.4,200.9 183.0,236.9 184.6,277.8 186.2,317.0 187.8,348.2 189.4,366.4 191.0,368.7 192.6,354.9 194.2,327.2 195.8,290.2 197.4,249.9 199.1,212.8 200.7,184.8 202.3,170.5 203.9,172.0 205.5,189.1 207.1,218.9 208.7,256.5 210.3,295.9 211.9,330.7 213.5,355.2 215.1,365.7 216.7,360.5 218.3,340.4 220.0,308.9 221.6,271.0 223.2,232.9 224.8,200.7 226.4,179.6 228.0,173.0 229.6,181.7 231.2,204.4 232.8,237.3 234.4,275.1 236.0,311.6 237.7,341.0 239.3,358.6 240.9,361.5 242.5,349.5 244.1,324.4 245.7,290.5 247.3,253.2 248.9,218.6 250.5,192.1 252.1,178.1 253.7,178.8 255.3,193.9 256.9,220.9 258.6,255.5 260.2,292.0 261.8,324.5 263.4,347.9 265.0,358.3 266.6,354.2 268.2,336.3 269.8,307.6 271.4,272.7 273.0,237.3 274.6,207.1 276.2,187.0 277.9,180.1 279.5,187.4 281.1,207.8 282.7,237.9 284.3,272.8 285.9,306.7 287.5,334.4 289.1,351.3 290.7,354.8 292.3,344.3 293.9,321.7 295.6,290.6 297.2,256.1 298.8,223.8 300.4,198.9 302.0,185.2 303.6,185.1 305.2,198.4 306.8,222.9 308.4,254.7 310.0,288.5 311.6,318.9 313.2,341.1 314.8,351.4 316.5,348.3 318.1,332.4 319.7,306.3 321.3,274.2 322.9,241.3 324.5,213.0 326.1,193.8 327.7,186.7 329.3,192.8 330.9,211.1 332.5,238.6 334.1,270.7 335.8,302.3 337.4,328.4 339.0,344.6 340.6,348.5 342.2,339.5 343.8,319.1 345.4,290.6 347.0,258.7 348.6,228.6 350.2,205.0 351.8,191.8 353.4,191.0 355.1,202.7 356.7,225.0 358.3,254.1 359.9,285.4 361.5,313.9 363.1,334.8 364.7,345.0 366.3,342.8 367.9,328.7 369.5,304.9 371.1,275.4 372.8,244.9 374.4,218.3 376.0,200.0 377.6,192.8 379.2,197.9 380.8,214.3 382.4,239.3 384.0,269.0 385.6,298.4 387.2,322.8 388.8,338.4 390.4,342.6 392.1,334.9 393.7,316.5 395.3,290.5 396.9,261.0 398.5,232.9 400.1,210.7 401.7,197.9 403.3,196.6 404.9,206.8 406.5,226.9 408.1,253.7 409.7,282.7 411.4,309.2 413.0,329.1 414.6,339.1 416.2,337.7 417.8,325.1 419.4,303.5 421.0,276.3 422.6,248.1 424.2,223.2 425.8,205.8 427.4,198.6 429.0,202.6 430.6,217.3 432.3,240.1 433.9,267.4 435.5,294.8 437.1,317.7 438.7,332.7 440.3,337.2 441.9,330.6 443.5,314.0 445.1,290.2 446.7,263.0 448.3,236.8 449.9,215.9 451.6,203.5 453.2,201.7 454.8,210.7 456.4,228.9 458.0,253.4 459.6,280.2 461.2,305.0 462.8,323.8 464.4,333.6 466.0,332.8 467.6,321.7 469.2,302.1 470.9,277.1 472.5,250.9 474.1,227.7 475.7,211.1 477.3,203.9 478.9,207.1 480.5,220.2 482.1,241.0 483.7,266.2 485.3,291.6 486.9,313.1 488.5,327.4 490.2,332.1 491.8,326.5 493.4,311.6 495.0,289.9 496.6,264.8 498.2,240.4 499.8,220.7 501.4,208.8 503.0,206.5 504.6,214.3 506.2,230.8 507.8,253.2 509.5,278.0 511.1,301.2 512.7,319.0 514.3,328.5 515.9,328.3 517.5,318.5 519.1,300.7 520.7,277.8 522.3,253.5 523.9,231.7 525.5,216.0 527.1,208.8 528.8,211.3 530.4,223.0 532.0,241.9 533.6,265.1 535.2,288.7 536.8,308.9 538.4,322.5 540.0,327.3 541.6,322.7 543.2,309.3 544.8,289.4 546.5,266.3 548.1,243.6 549.7,225.1 551.3,213.6 552.9,211.0 554.5,217.8 556.1,232.6 557.7,253.2 559.3,276.1 560.9,297.7 562.5,314.5 564.1,323.8 565.8,324.1 567.4,315.5 569.0,299.3 570.6,278.3 572.2,255.7 573.8,235.4 575.4,220.5 577.0,213.4 578.6,215.2 580.2,225.6 581.8,242.9 583.4,264.2 585.0,286.1 586.7,305.0 588.3,318.0 589.9,322.9 591.5,319.1 593.1,307.1 594.7,288.9 596.3,267.6 597.9,246.5 599.5,229.1 601.1,218.1 602.7,215.2 604.3,221.0 606.0,234.4 607.6,253.3 609.2,274.4 610.8,294.6 612.4,310.4 614.0,319.4 615.6,320.1 617.2,312.6 618.8,297.9 620.4,278.6 622.0,257.8 623.6,238.8 625.3,224.6 626.9,217.7 628.5,218.9 630.1,228.1 631.7,243.8 633.3,263.4 634.9,283.7 636.5,301.5 638.1,313.8 639.7,318.8 641.3,315.7 642.9,304.9 644.6,288.4 646.2,268.7 647.8,249.1 649.4,232.7 651.0,222.2 652.6,219.2 654.2,224.1 655.8,236.2 657.4,253.4 659.0,273.0 660.6,291.7 662.2,306.6 663.9,315.3 665.5,316.4 667.1,309.8 668.7,296.6 670.3,278.9 671.9,259.6 673.5,241.8 675.1,228.5 676.7,221.6 678.3,222.4 679.9,230.5 681.5,244.8 683.2,262.8 684.8,281.6 686.4,298.3 688.0,310.0 689.6,315.0 691.2,312.5 692.8,302.9 694.4,287.8 696.0,269.7 697.6,251.5 699.2,236.1 700.8,226.0 702.5,222.8 704.1,227.0 705.7,237.9 707.3,253.6 708.9,271.7 710.5,289.1" stroke="#00FF00" fill="none" stroke-width="1.1"/>
<polyline points="131.5,268.5 131.5,268.5 133.1,268.5 134.7,268.5 136.3,268.5 137.9,268.5 139.5,268.5 141.2,268.5 142.8,268.5 144.4,268.5 146.0,268.5 147.6,268.5 149.2,268.5 150.8,268.5 152.4,268.5 154.0,268.5 155.6,268.5 157.2,268.5 158.8,268.5 160.4,268.5 162.1,268.5 163.7,268.5 165.3,268.7 166.9,270.1 168.5,273.8 170.1,280.4 171.7,289.8 173.3,300.7 174.9,311.2 176.5,318.6 178.1,320.3 179.8,314.9 181.4,302.3 183.0,284.3 184.6,263.9 186.2,244.2 187.8,228.6 189.4,219.5 191.0,218.4 192.6,225.3 194.2,239.1 195.8,257.6 197.4,277.8 199.1,296.4 200.7,310.3 202.3,317.5 203.9,316.7 205.5,308.2 207.1,293.3 208.7,274.5 210.3,254.8 211.9,237.4 213.5,225.1 215.1,219.9 216.7,222.5 218.3,232.5 220.0,248.3 221.6,267.2 223.2,286.3 224.8,302.4 226.4,312.9 228.0,316.3 229.6,311.9 231.2,300.5 232.8,284.1 234.4,265.2 236.0,246.9 237.7,232.2 239.3,223.5 240.9,222.0 242.5,228.0 244.1,240.5 245.7,257.5 247.3,276.1 248.9,293.5 250.5,306.7 252.1,313.7 253.7,313.4 255.3,305.8 256.9,292.3 258.6,275.0 260.2,256.7 261.8,240.5 263.4,228.8 265.0,223.6 266.6,225.6 268.2,234.6 269.8,248.9 271.4,266.4 273.0,284.1 274.6,299.2 276.2,309.3 277.9,312.7 279.5,309.0 281.1,298.8 282.7,283.8 284.3,266.4 285.9,249.4 287.5,235.5 289.1,227.1 290.7,225.4 292.3,230.6 293.9,241.9 295.6,257.4 297.2,274.7 298.8,290.8 300.4,303.3 302.0,310.1 303.6,310.2 305.2,303.5 306.8,291.3 308.4,275.4 310.0,258.5 311.6,243.3 313.2,232.2 314.8,227.0 316.5,228.6 318.1,236.5 319.7,249.6 321.3,265.7 322.9,282.1 324.5,296.3 326.1,305.9 327.7,309.4 329.3,306.3 330.9,297.2 332.5,283.5 334.1,267.4 335.8,251.6 337.4,238.6 339.0,230.5 340.6,228.5 342.2,233.0 343.8,243.2 345.4,257.4 347.0,273.4 348.6,288.5 350.2,300.2 351.8,306.8 353.4,307.2 355.1,301.4 356.7,290.3 358.3,275.7 359.9,260.0 361.5,245.8 363.1,235.3 364.7,230.2 366.3,231.3 367.9,238.4 369.5,250.3 371.1,265.1 372.8,280.3 374.4,293.6 376.0,302.7 377.6,306.3 379.2,303.8 380.8,295.6 382.4,283.1 384.0,268.3 385.6,253.6 387.2,241.3 388.8,233.6 390.4,231.4 392.1,235.3 393.7,244.5 395.3,257.5 396.9,272.2 398.5,286.3 400.1,297.4 401.7,303.8 403.3,304.5 404.9,299.4 406.5,289.3 408.1,275.9 409.7,261.4 411.4,248.1 413.0,238.2 414.6,233.2 416.2,233.9 417.8,240.2 419.4,251.0 421.0,264.6 422.6,278.7 424.2,291.1 425.8,299.9 427.4,303.5 429.0,301.4 430.6,294.1 432.3,282.7 433.9,269.0 435.5,255.4 437.1,243.9 438.7,236.4 440.3,234.2 441.9,237.5 443.5,245.7 445.1,257.6 446.7,271.2 448.3,284.3 449.9,294.8 451.6,301.0 453.2,301.9 454.8,297.4 456.4,288.3 458.0,276.1 459.6,262.6 461.2,250.2 462.8,240.8 464.4,236.0 466.0,236.3 467.6,241.9 469.2,251.7 470.9,264.2 472.5,277.3 474.1,288.9 475.7,297.2 477.3,300.8 478.9,299.2 480.5,292.7 482.1,282.2 483.7,269.7 485.3,257.0 486.9,246.2 488.5,239.1 490.2,236.7 491.8,239.5 493.4,246.9 495.0,257.8 496.6,270.4 498.2,282.6 499.8,292.4 501.4,298.4 503.0,299.5 504.6,295.6 506.2,287.4 507.8,276.1 509.5,263.7 511.1,252.2 512.7,243.3 514.3,238.5 515.9,238.6 517.5,243.5 519.1,252.4 520.7,263.9 522.3,276.0 523.9,286.9 525.5,294.8 527.1,298.3 528.8,297.1 530.4,291.3 532.0,281.8 533.6,270.2 535.2,258.4 536.8,248.3 538.4,241.5 540.0,239.1 541.6,241.4 543.2,248.1 544.8,258.0 546.5,269.6 548.1,281.0 549.7,290.2 551.3,296.0 552.9,297.2 554.5,293.9 556.1,286.4 557.7,276.2 559.3,264.7 560.9,253.9 562.5,245.5 564.1,240.9 565.8,240.7 567.4,245.0 569.0,253.1 570.6,263.6 572.2,274.9 573.8,285.0 575.4,292.5 577.0,296.1 578.6,295.1 580.2,289.9 581.8,281.3 583.4,270.7 585.0,259.7 586.7,250.2 588.3,243.8 589.9,241.3 591.5,243.2 593.1,249.2 594.7,258.3 596.3,269.0 597.9,279.5 599.5,288.2 601.1,293.7 602.7,295.1 604.3,292.2 606.0,285.5 607.6,276.1 609.2,265.5 610.8,255.5 612.4,247.6 614.0,243.1 615.6,242.7 617.2,246.5 618.8,253.8 620.4,263.4 622.0,273.9 623.6,283.4 625.3,290.4 626.9,293.9 628.5,293.3 630.1,288.7 631.7,280.8 633.3,271.0 634.9,260.9 636.5,252.0 638.1,245.8 639.7,243.3 641.3,244.9 642.9,250.3 644.6,258.6 646.2,268.4 647.8,278.2 649.4,286.4 651.0,291.7 652.6,293.2 654.2,290.7 655.8,284.7 657.4,276.0 659.0,266.3 660.6,256.9 662.2,249.4 663.9,245.1 665.5,244.5 667.1,247.8 668.7,254.5 670.3,263.3 671.9,273.0 673.5,281.8 675.1,288.5 676.7,291.9 678.3,291.6 679.9,287.5 681.5,280.4 683.2,271.4 684.8,261.9 686.4,253.6 688.0,247.7 689.6,245.2 691.2,246.5 692.8,251.3 694.4,258.8 696.0,267.9 697.6,277.0 699.2,284.7 700.8,289.8 702.5,291.3 704.1,289.2 705.7,283.8 707.3,275.9 708.9,266.9 710.5,258.2" stroke="#0000FF" fill="none" stroke-width="1.1"/>
<polyline points="131.5,268.5 131.5,268.5 133.1,268.5 134.7,268.5 136.3,268.5 137.9,268.5 139.5,268.5 141.2,268.5 142.8,268.5 144.4,268.5 146.0,268.5 147.6,268.5 149.2,268.5 150.8,268.5 152.4,268.5 154.0,268.5 155.6,268.5 157.2,268.5 158.8,268.5 160.4,268.5 162.1,268.5 163.7,268.5 165.3,268.3 166.9,266.9 168.5,263.2 170.1,256.6 171.7,247.2 173.3,236.3 174.9,225.8 176.5,218.4 178.1,216.7 179.8,222.1 181.4,234.7 183.0,252.7 184.6,273.1 186.2,292.8 187.8,308.4 189.4,317.5 191.0,318.6 192.6,311.7 194.2,297.9 195.8,279.4 197.4,259.2 199.1,240.6 200.7,226.7 202.3,219.5 203.9,220.3 205.5,228.8 207.1,243.7 208.7,262.5 210.3,282.2 211.9,299.6 213.5,311.9 215.1,317.1 216.7,314.5 218.3,304.5 220.0,288.7 221.6,269.8 223.2,250.7 224.8,234.6 226.4,224.1 228.0,220.7 229.6,225.1 231.2,236.5 232.8,252.9 234.4,271.8 236.0,290.1 237.7,304.8 239.3,313.5 240.9,315.0 242.5,309.0 244.1,296.5 245.7,279.5 247.3,260.9 248.9,243.5 250.5,230.3 252.1,223.3 253.7,223.6 255.3,231.2 256.9,244.7 258.6,262.0 260.2,280.3 261.8,296.5 263.4,308.2 265.0,313.4 266.6,311.4 268.2,302.4 269.8,288.1 271.4,270.6 273.0,252.9 274.6,237.8 276.2,227.7 277.9,224.3 279.5,228.0 281.1,238.2 282.7,253.2 284.3,270.6 285.9,287.6 287.5,301.5 289.1,309.9 290.7,311.6 292.3,306.4 293.9,295.1 295.6,279.6 297.2,262.3 298.8,246.2 300.4,233.7 302.0,226.9 303.6,226.8 305.2,233.5 306.8,245.7 308.4,261.6 310.0,278.5 311.6,293.7 313.2,304.8 314.8,310.0 316.5,308.4 318.1,300.5 319.7,287.4 321.3,271.3 322.9,254.9 324.5,240.7 326.1,231.1 327.7,227.6 329.3,230.7 330.9,239.8 332.5,253.5 334.1,269.6 335.8,285.4 337.4,298.4 339.0,306.5 340.6,308.5 342.2,304.0 343.8,293.8 345.4,279.6 347.0,263.6 348.6,248.5 350.2,236.8 351.8,230.2 353.4,229.8 355.1,235.6 356.7,246.7 358.3,261.3 359.9,277.0 361.5,291.2 363.1,301.7 364.7,306.8 366.3,305.7 367.9,298.6 369.5,286.7 371.1,271.9 372.8,256.7 374.4,243.4 376.0,234.3 377.6,230.7 379.2,233.2 380.8,241.4 382.4,253.9 384.0,268.7 385.6,283.4 387.2,295.7 388.8,303.4 390.4,305.6 392.1,301.7 393.7,292.5 395.3,279.5 396.9,264.8 398.5,250.7 400.1,239.6 401.7,233.2 403.3,232.5 404.9,237.6 406.5,247.7 408.1,261.1 409.7,275.6 411.4,288.9 413.0,298.8 414.6,303.8 416.2,303.1 417.8,296.8 419.4,286.0 421.0,272.4 422.6,258.3 424.2,245.9 425.8,237.1 427.4,233.5 429.0,235.6 430.6,242.9 432.3,254.3 433.9,268.0 435.5,281.6 437.1,293.1 438.7,300.6 440.3,302.8 441.9,299.5 443.5,291.3 445.1,279.4 446.7,265.8 448.3,252.7 449.9,242.2 451.6,236.0 453.2,235.1 454.8,239.6 456.4,248.7 458.0,260.9 459.6,274.4 461.2,286.8 462.8,296.2 464.4,301.0 466.0,300.7 467.6,295.1 469.2,285.3 470.9,272.8 472.5,259.7 474.1,248.1 475.7,239.8 477.3,236.2 478.9,237.8 480.5,244.3 482.1,254.8 483.7,267.3 485.3,280.0 486.9,290.8 488.5,297.9 490.2,300.3 491.8,297.5 493.4,290.1 495.0,279.2 496.6,266.6 498.2,254.4 499.8,244.6 501.4,238.6 503.0,237.5 504.6,241.4 506.2,249.6 507.8,260.9 509.5,273.3 511.1,284.8 512.7,293.7 514.3,298.5 515.9,298.4 517.5,293.5 519.1,284.6 520.7,273.1 522.3,261.0 523.9,250.1 525.5,242.2 527.1,238.7 528.8,239.9 530.4,245.7 532.0,255.2 533.6,266.8 535.2,278.6 536.8,288.7 538.4,295.5 540.0,297.9 541.6,295.6 543.2,288.9 544.8,279.0 546.5,267.4 548.1,256.0 549.7,246.8 551.3,241.0 552.9,239.8 554.5,243.1 556.1,250.6 557.7,260.8 559.3,272.3 560.9,283.1 562.5,291.5 564.1,296.1 565.8,296.3 567.4,292.0 569.0,283.9 570.6,273.4 572.2,262.1 573.8,252.0 575.4,244.5 577.0,240.9 578.6,241.9 580.2,247.1 581.8,255.7 583.4,266.3 585.0,277.3 586.7,286.8 588.3,293.2 589.9,295.7 591.5,293.8 593.1,287.8 594.7,278.7 596.3,268.0 597.9,257.5 599.5,248.8 601.1,243.3 602.7,241.9 604.3,244.8 606.0,251.5 607.6,260.9 609.2,271.5 610.8,281.5 612.4,289.4 614.0,293.9 615.6,294.3 617.2,290.5 618.8,283.2 620.4,273.6 622.0,263.1 623.6,253.6 625.3,246.6 626.9,243.1 628.5,243.7 630.1,248.3 631.7,256.2 633.3,266.0 634.9,276.1 636.5,285.0 638.1,291.2 639.7,293.7 641.3,292.1 642.9,286.7 644.6,278.4 646.2,268.6 647.8,258.8 649.4,250.6 651.0,245.3 652.6,243.8 654.2,246.3 655.8,252.3 657.4,261.0 659.0,270.7 660.6,280.1 662.2,287.6 663.9,291.9 665.5,292.5 667.1,289.2 668.7,282.5 670.3,273.7 671.9,264.0 673.5,255.2 675.1,248.5 676.7,245.1 678.3,245.4 679.9,249.5 681.5,256.6 683.2,265.6 684.8,275.1 686.4,283.4 688.0,289.3 689.6,291.8 691.2,290.5 692.8,285.7 694.4,278.2 696.0,269.1 697.6,260.0 699.2,252.3 700.8,247.2 702.5,245.7 704.1,247.8 705.7,253.2 707.3,261.1 708.9,270.1 710.5,278.8" stroke="#FF00FF" fill="none" stroke-width="1.1"/>
</g>
<rect x="651" y="406" width="80" height="3" fill="#FFFFF4" />
<rect x="651" y="409" width="80" height="1" fill="#ECE9D8" />
<rect x="0" y="406" width="651" height="294" fill="#ECE9D8" />
<rect x="0" y="406" width="651" height="1" fill="#ACA899" />
<rect x="1" y="407" width="649" height="2" fill="#FFFFFF" />
<rect x="0" y="406" width="1" height="294" fill="#716F64" />
<rect x="1" y="407" width="2" height="293" fill="#FFFFFF" />
<rect x="649" y="407" width="1" height="293" fill="#ACA899" />
<rect x="650" y="406" width="1" height="294" fill="#716F64" />
<rect x="5" y="412" width="643" height="25" fill="#7A96DF" />
<rect x="12" y="423" width="3" height="1" fill="#0000FF" />
<rect x="15" y="419" width="2" height="9" fill="#0000FF" />
<rect x="17" y="420" width="1" height="1" fill="#0000FF" />
<rect x="18" y="419" width="1" height="1" fill="#0000FF" />
<rect x="19" y="418" width="1" height="1" fill="#0000FF" />
<rect x="20" y="417" width="1" height="1" fill="#0000FF" />
<rect x="21" y="416" width="1" height="1" fill="#0000FF" />
<rect x="17" y="426" width="1" height="1" fill="#0000FF" />
<rect x="18" y="427" width="1" height="1" fill="#0000FF" />
<rect x="19" y="428" width="1" height="1" fill="#0000FF" />
<rect x="20" y="429" width="1" height="1" fill="#0000FF" />
<rect x="21" y="430" width="1" height="1" fill="#0000FF" />
<rect x="22" y="431" width="1" height="1" fill="#0000FF" />
<rect x="18" y="428" width="3" height="2" fill="#0000FF" />
<rect x="20" y="427" width="1" height="1" fill="#0000FF" />
<rect x="20" y="430" width="2" height="1" fill="#0000FF" />
<g filter="url(#crispH)"><text x="31.5" y="429" font-size="14" fill="#D8E4F8" font-weight="bold" text-anchor="start" textLength="74.5" lengthAdjust="spacingAndGlyphs">GSMcup.asc</text></g>
<rect x="596" y="414" width="16" height="21" fill="#716F64" />
<rect x="596" y="414" width="15" height="20" fill="#FFFFFF" />
<rect x="597" y="415" width="14" height="19" fill="#ACA899" />
<rect x="597" y="415" width="13" height="18" fill="#ECE9D8" />
<rect x="600" y="426" width="6" height="2" fill="#000" />
<rect x="612" y="414" width="16" height="21" fill="#716F64" />
<rect x="612" y="414" width="15" height="20" fill="#FFFFFF" />
<rect x="613" y="415" width="14" height="19" fill="#ACA899" />
<rect x="613" y="415" width="13" height="18" fill="#ECE9D8" />
<rect x="614" y="419" width="9" height="9" fill="#000" />
<rect x="615" y="421" width="7" height="6" fill="#ECE9D8" />
<rect x="630" y="414" width="16" height="21" fill="#716F64" />
<rect x="630" y="414" width="15" height="20" fill="#FFFFFF" />
<rect x="631" y="415" width="14" height="19" fill="#ACA899" />
<rect x="631" y="415" width="13" height="18" fill="#ECE9D8" />
<path d="M634.5,420.5 L641.5,427.5 M641.5,420.5 L634.5,427.5" stroke="#000" fill="none" stroke-width="2" />
<rect x="5" y="439" width="641" height="1" fill="#8A887C" />
<rect x="5" y="439" width="1" height="261" fill="#ACA899" />
<rect x="6" y="440" width="1" height="260" fill="#716F64" />
<rect x="7" y="440" width="639" height="260" fill="#C0C0C0" />
<rect x="646" y="439" width="1" height="261" fill="#FFFFFF" />
<path d="M169.5,506 V446.5 H365.5 V546" stroke="#0000FF" fill="none" stroke-width="1.3" shape-rendering="crispEdges"/>
<path d="M169.5,549 V632.5 H465 V599" stroke="#0000FF" fill="none" stroke-width="1.3" shape-rendering="crispEdges"/>
<path d="M245.5,632.5 V599" stroke="#0000FF" fill="none" stroke-width="1.3" shape-rendering="crispEdges"/>
<path d="M245.5,545 V490.5" stroke="#0000FF" fill="none" stroke-width="1.3" shape-rendering="crispEdges"/>
<path d="M300,490.5 H410.5" stroke="#0000FF" fill="none" stroke-width="1.3" shape-rendering="crispEdges"/>
<path d="M365.5,587 V643" stroke="#0000FF" fill="none" stroke-width="1.3" shape-rendering="crispEdges"/>
<path d="M465,490.5 V545" stroke="#0000FF" fill="none" stroke-width="1.3" shape-rendering="crispEdges"/>

<circle cx="169.5" cy="527.5" r="21.3" stroke="#000080" fill="none" stroke-width="1"/>
<path d="M169.5,517 V533 M166.5,532.5 H172.5 L169.5,540 Z" stroke="#000080" fill="none" stroke-width="1.0"/>
<path d="M246,490.5 H251 L256,479.7 L267,500.9 L278,479.7 L289,500.9 L294.5,490.5 H300.5" stroke="#000080" fill="none" stroke-width="1.0"/>
<path d="M410.5,490.5 H415.5 L420.5,479.7 L431.5,500.9 L442.5,479.7 L453.5,500.9 L459.0,490.5 H465.0" stroke="#000080" fill="none" stroke-width="1.0"/>
<path d="M365.5,546 V564 M355,564 H377 M355,569 H377 M365.5,569 V587" stroke="#000080" fill="none" stroke-width="1.0"/>
<path d="M353.5,643.5 H378.5 L366,655.5 Z" stroke="#0000FF" fill="none" stroke-width="1"/>
<path d="M245.5,545 H247.0 C259.5,545 259.5,563.5 247.0,563.5 C259.5,563.5 259.5,581.5 247.0,581.5 C259.5,581.5 259.5,599.5 247.0,599.5 H245.5" stroke="#000080" fill="none" stroke-width="1.0"/>
<ellipse cx="246.0" cy="563.5" rx="8.5" ry="3.2" stroke="#000080" fill="none" stroke-width="1"/>
<ellipse cx="246.0" cy="581.5" rx="8.5" ry="3.2" stroke="#000080" fill="none" stroke-width="1"/>
<path d="M465,545 H463.5 C451.0,545 451.0,563.5 463.5,563.5 C451.0,563.5 451.0,581.5 463.5,581.5 C451.0,581.5 451.0,599.5 463.5,599.5 H465" stroke="#000080" fill="none" stroke-width="1.0"/>
<ellipse cx="464.5" cy="563.5" rx="8.5" ry="3.2" stroke="#000080" fill="none" stroke-width="1"/>
<ellipse cx="464.5" cy="581.5" rx="8.5" ry="3.2" stroke="#000080" fill="none" stroke-width="1"/>
<circle cx="239.5" cy="590.8" r="2" stroke="#000080" fill="none" stroke-width="1"/>
<circle cx="469.5" cy="552.8" r="2" stroke="#000080" fill="none" stroke-width="1"/>
<rect x="362.0" y="487.0" width="7" height="7" fill="#0000FF" />
<rect x="242.0" y="629.0" width="7" height="7" fill="#0000FF" />
<rect x="362.0" y="629.0" width="7" height="7" fill="#0000FF" />
<g filter="url(#crispH)"><text x="184.5" y="506.5" font-size="16" fill="#000" font-weight="bold" text-anchor="start" >I1</text></g>
<g filter="url(#crispH)"><text x="261.5" y="474.6" font-size="16" fill="#000" font-weight="bold" text-anchor="start" >R1</text></g>
<g filter="url(#crispH)"><text x="267.5" y="515.7" font-size="16" fill="#000" font-weight="bold" text-anchor="start" >1</text></g>
<g filter="url(#crispH)"><text x="425.8" y="474.6" font-size="16" fill="#000" font-weight="bold" text-anchor="start" >R2</text></g>
<g filter="url(#crispH)"><text x="432" y="516" font-size="16" fill="#000" font-weight="bold" text-anchor="start" >1</text></g>
<g filter="url(#crispH)"><text x="259" y="566.8" font-size="16" fill="#000" font-weight="bold" text-anchor="start" >L1</text></g>
<g filter="url(#crispH)"><text x="259.5" y="594.2" font-size="16" fill="#000" font-weight="bold" text-anchor="start" >10µ</text></g>
<g filter="url(#crispH)"><text x="430.8" y="561.7" font-size="16" fill="#000" font-weight="bold" text-anchor="start" >L2</text></g>
<g filter="url(#crispH)"><text x="423.9" y="588.2" font-size="16" fill="#000" font-weight="bold" text-anchor="start" >10µ</text></g>
<g filter="url(#crispH)"><text x="371.2" y="556" font-size="16" fill="#000" font-weight="bold" text-anchor="start" >C1</text></g>
<g filter="url(#crispH)"><text x="371.2" y="588" font-size="16" fill="#000" font-weight="bold" text-anchor="start" >30p</text></g>
<g filter="url(#crispH)"><text x="169" y="698" font-size="16" fill="#000" font-weight="bold" text-anchor="start" textLength="82.5" lengthAdjust="spacingAndGlyphs">.tran 0 3u 0</text></g>
<g filter="url(#crispH)"><text x="398.5" y="698" font-size="16" fill="#000" font-weight="bold" text-anchor="start" textLength="92" lengthAdjust="spacingAndGlyphs">K L1 L2 0.99</text></g>
</g>
</svg>
</body></html>
